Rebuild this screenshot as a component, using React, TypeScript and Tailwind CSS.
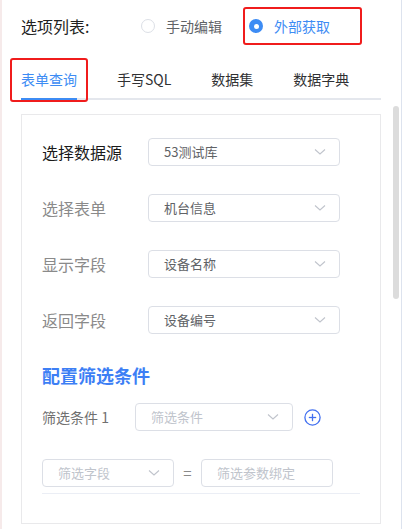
import React from "react";

const Chevron = () => (
  <svg width="12" height="8" viewBox="0 0 12 8" fill="none" className="shrink-0">
    <polyline points="1,1.5 6,6 11,1.5" stroke="#c0c4cc" strokeWidth="1.1" fill="none" />
  </svg>
);

const Select = ({ value, placeholder, w }: { value?: string; placeholder?: string; w: string }) => (
  <div className={`${w} h-[28px] border border-[#dcdfe6] rounded-[4px] flex items-center justify-between pl-[15px] pr-[13px] bg-white`}>
    <span className={`text-[13px] leading-[18px] ${value ? "text-[#606266]" : "text-[#c0c4cc]"}`}>{value ?? placeholder}</span>
    <Chevron />
  </div>
);

const FormRow = ({ label, value, dark }: { label: string; value: string; dark?: boolean }) => (
  <div className="flex items-center h-[28px]">
    <div className={`w-[106px] text-[16px] leading-[22px] ${dark ? "text-[#1a1a1a]" : "text-[#8a8a8a]"}`}>{label}</div>
    <Select value={value} w="w-[192px]" />
  </div>
);

export default function App() {
  return (
    <div className="w-[402px] h-[529px] bg-white flex border-l-[2px] border-l-[#f6eaea] border-r border-r-[#dde3ee] font-['Noto_Sans_CJK_SC','Noto_Sans',sans-serif] overflow-hidden">
      <div className="w-[390px] shrink-0 flex flex-col">
        {/* top radio row */}
        <div className="flex items-center pl-[19px] pt-[7px] h-[45px]">
          <div className="w-[120px] text-[16px] leading-[22px] text-[#222]">选项列表:</div>
          <div className="flex items-center">
            <span className="w-[14px] h-[14px] rounded-full border border-[#dcdfe6] bg-white" />
            <span className="ml-[11px] text-[14px] leading-[20px] text-[#606266]">手动编辑</span>
          </div>
          <div className="ml-[21px] h-[38px] w-[119px] border-2 border-[#f01c1c] rounded-[3px] flex items-center pl-[4px]">
            <span className="w-[14px] h-[14px] rounded-full bg-[#3d8cf4] flex items-center justify-center">
              <span className="w-[5px] h-[5px] rounded-full bg-white" />
            </span>
            <span className="ml-[11px] text-[14px] leading-[20px] text-[#3d8cf4]">外部获取</span>
          </div>
        </div>

        {/* tabs */}
        <div className="ml-[19px] mt-[15px] w-[360px] h-[40px] border-b-2 border-[#e4e7ed] flex gap-10">
          <div className="relative h-[40px] -mb-[2px] border-b-2 border-[#3d8cf4] flex items-center">
            <span className="text-[14px] leading-[20px] text-[#3d8cf4]">表单查询</span>
            <span className="absolute -left-[11px] -right-[11px] -top-[2px] -bottom-[4px] border-2 border-[#f01c1c] rounded-[3px]" />
          </div>
          <div className="h-[38px] flex items-center text-[14px] leading-[20px] text-[#303133]">手写SQL</div>
          <div className="h-[38px] flex items-center text-[14px] leading-[20px] text-[#303133]">数据集</div>
          <div className="h-[38px] flex items-center text-[14px] leading-[20px] text-[#303133]">数据字典</div>
        </div>

        {/* panel */}
        <div className="ml-[19px] mt-[14px] w-[360px] h-[410px] border border-[#e9e9eb] pl-[20px] pt-[23px] flex flex-col">
          <div className="flex flex-col gap-[28px]">
            <FormRow label="选择数据源" value="53测试库" dark />
            <FormRow label="选择表单" value="机台信息" />
            <FormRow label="显示字段" value="设备名称" />
            <FormRow label="返回字段" value="设备编号" />
          </div>
          <div className="mt-[28px] h-[26px] flex items-center text-[18px] leading-[26px] font-bold text-[#3d7ff5]">配置筛选条件</div>
          <div className="mt-[15px] flex items-center h-[28px]">
            <div className="w-[93px] text-[14px] leading-[20px] text-[#707070]">筛选条件 1</div>
            <Select placeholder="筛选条件" w="w-[158px]" />
            <svg width="17" height="17" viewBox="0 0 17 17" className="ml-[11px]">
              <circle cx="8.5" cy="8.5" r="7.6" fill="none" stroke="#4270f0" strokeWidth="1.3" />
              <line x1="8.5" y1="4.8" x2="8.5" y2="12.2" stroke="#4270f0" strokeWidth="1.3" />
              <line x1="4.8" y1="8.5" x2="12.2" y2="8.5" stroke="#4270f0" strokeWidth="1.3" />
            </svg>
          </div>
          <div className="mt-[28px] flex items-center h-[28px]">
            <Select placeholder="筛选字段" w="w-[132px]" />
            <div className="w-[27px] text-center text-[15px] leading-[20px] text-[#8a8a8a]">=</div>
            <div className="w-[132px] h-[28px] border border-[#dcdfe6] rounded-[4px] flex items-center pl-[15px]">
              <span className="text-[13px] leading-[18px] text-[#c0c4cc]">筛选参数绑定</span>
            </div>
          </div>
          <div className="mt-[6px] w-[318px] h-px bg-[#ebeef5]" />
        </div>
      </div>
      {/* scrollbar */}
      <div className="flex-1 pt-[106px] pl-[1px]">
        <div className="w-[6px] h-[193px] rounded-full bg-[#dcdcdc]" />
      </div>
    </div>
  );
}
